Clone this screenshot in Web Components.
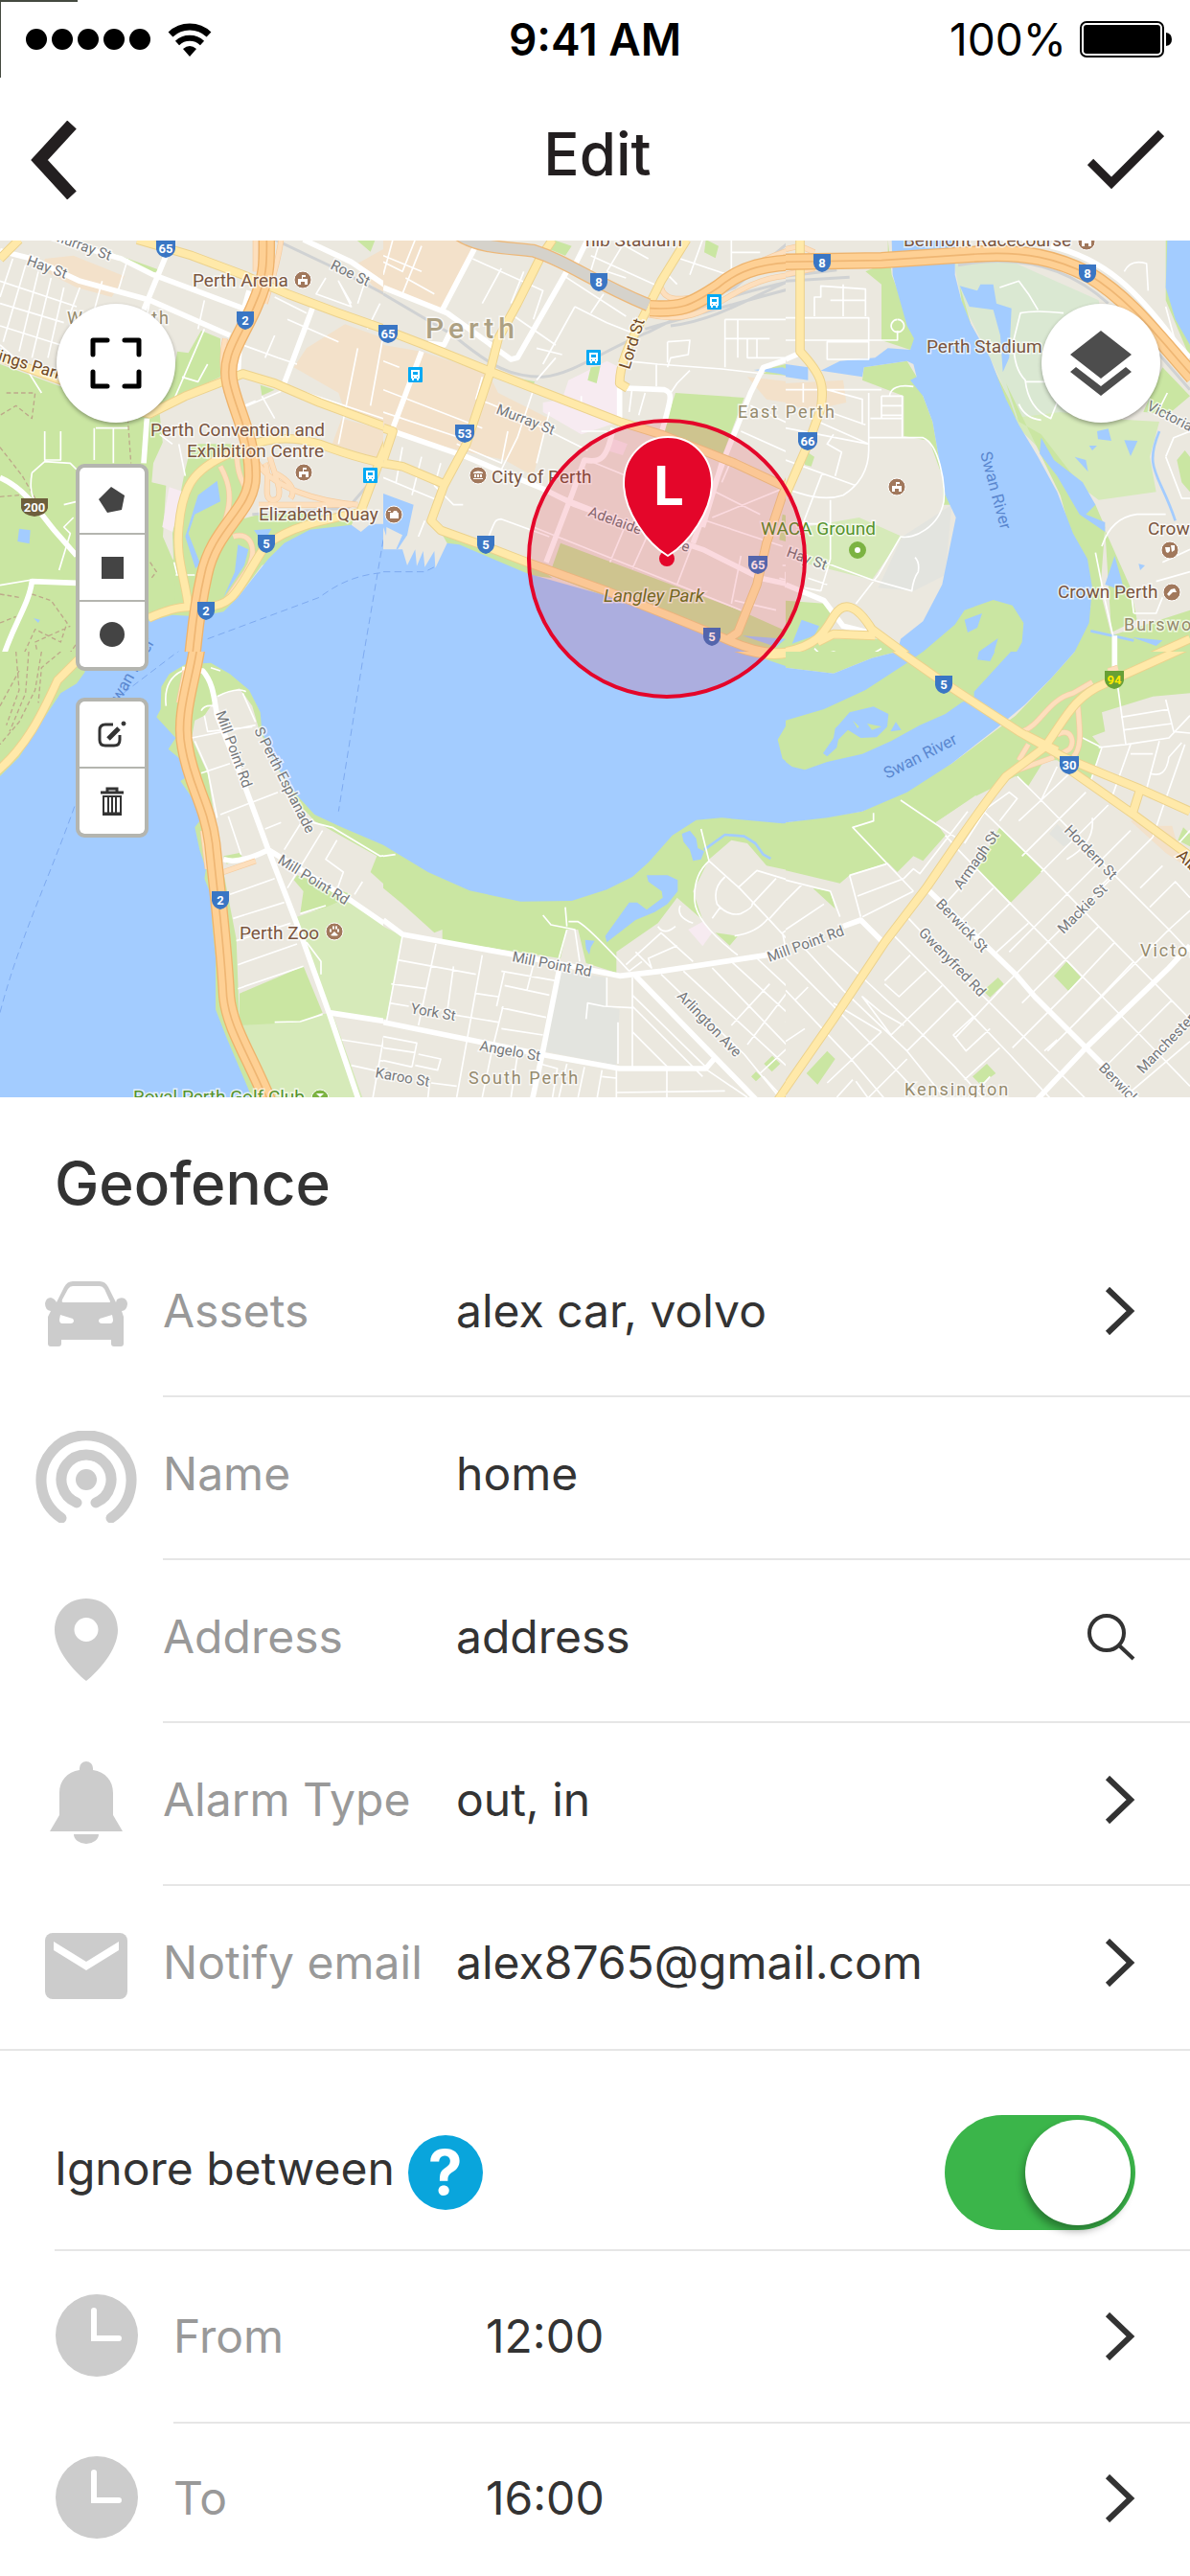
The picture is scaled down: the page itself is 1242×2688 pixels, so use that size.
<!DOCTYPE html>
<html lang=en>
<head>
<meta charset=utf-8>
<meta name=viewport content="width=device-width">
<title>Edit geofence</title>
<style>
body {
    margin:0;
    background:#fff;color:#333;
    font:48px/64px Inter,"Liberation Sans",sans-serif;
    overflow-x:hidden;
}
</style>
</head>
<body>
<status-bar></status-bar>
<title-bar>Edit</title-bar>
<main>
    <geo-map></geo-map>
    <geo-section>
        <span slot=title>Geofence</span>
        <form-row icon=car label=Assets action=open>alex car, volvo</form-row>
        <form-row icon=beacon label=Name value=home></form-row>
        <form-row icon=pin label=Address value=address action=search></form-row>
        <form-row icon=bell label="Alarm Type" action=open>out, in</form-row>
        <form-row icon=mail label="Notify email" action=open class=last>alex8765@gmail.com</form-row>
    </geo-section>
    <switch-row>Ignore between</switch-row>
    <form-row class=time icon=clock label=From action=open>12:00</form-row>
    <form-row class="time end" icon=clock label=To action=open>16:00</form-row>
</main>
<script>
const icons = {
    car: `<svg width=86 height=68 fill=#ccc><path fill-rule=evenodd d="M12 22L20 6Q23 0 29 0H57Q63 0 66 6L74 22 75 19Q79 16 83 18 86 20 86 24 85 31 80 31L82 37V65a3 3 0 0 1-3 3h-7a3 3 0 0 1-3-3v-4H17v4a3 3 0 0 1-3 3H6a3 3 0 0 1-3-3V37L6 31Q0 30 0 23 1 17 6 17 10 18 12 22ZM19 22H67Q69 22 67 19L62 8Q60 5 57 5H29Q26 5 24 8L18 19Q17 22 19 22ZM16 35L29 39Q30 40 30 42 29 44 27 44H18Q15 44 15 40ZM70 35L57 39Q56 40 56 42 57 44 59 44H68Q71 44 71 40Z"/></svg>`,
    beacon: `<svg width=106 height=96 fill=none stroke=#ccc stroke-width=11 stroke-linecap=round><path d="M27 91A47 47 0 1 1 79 91M43 75A26 26 0 1 1 63 75"/><circle cx=53 cy=51 r=11 fill=#ccc stroke=none /></svg>`,
    pin: `<svg width=66 height=86 fill=#ccc><path fill-rule=evenodd d="M33 0C14 0 0 14 0 33 0 53 20 76 33 86 46 76 66 53 66 33 66 14 52 0 33 0ZM33 20a12 12 0 1 1 0 25 12 12 0 1 1 0-25Z"/></svg>`,
    bell: `<svg width=76 height=86 fill=#ccc><path d="M31 9V7a7 7 0 0 1 14 0V9C58 11 66 20 66 33V56L76 73H0L10 56V33C10 20 18 11 31 9ZM25 76H51A13 10 0 0 1 25 76Z"/></svg>`,
    mail: `<svg width=86 height=69><rect width=86 height=69 rx=8 fill=#ccc /><path fill=#fff d="M9 9L43 30 77 9V18L43 39 9 18Z"/></svg>`,
    clock: `<svg width=86 height=86 fill=none><circle cx=43 cy=43 r=43 fill=#ccc /><path stroke=#fff stroke-width=6 stroke-linecap=round d="M40 17V46H66"/></svg>`,
    open: `<svg width=32 height=50 fill=none stroke=#333 stroke-width=6><path d="M3 2L27 25 3 48"/></svg>`,
    search: `<svg width=50 height=50 fill=none stroke=#333 stroke-width=4><circle cx=20 cy=21 r=18 /><path d="M33 34L48 48"/></svg>`,
    back: `<svg width=48 height=82 fill=none stroke=#231f20 stroke-width=13><path d="M43 4L9 41 43 78"/></svg>`,
    check: `<svg width=80 height=62 fill=none stroke=#231f20 stroke-width=9><path d="M3 33L25 55 77 3"/></svg>`,
    expand: `<svg width=54 height=54 fill=none stroke=#000 stroke-width=5 stroke-linecap=round stroke-linejoin=round><path d="M3 18V3H18M36 3H51V18M51 36V51H36M18 51H3V36"/></svg>`,
    layers: `<svg width=64 height=68 fill=#4d4d4d><path d="M32 0L64 25 32 50 0 25ZM0 43L6 38 32 58 58 38 64 43 32 68Z"/></svg>`,
    polygon: `<svg width=28 height=28 fill=#444><path d="M13 0L27 9 24 24 9 27 0 13Z"/></svg>`,
    square: `<svg width=23 height=23 fill=#444><path d="M0 0H23V23H0Z"/></svg>`,
    circle: `<svg width=26 height=26 fill=#444><circle cx=13 cy=13 r=13 /></svg>`,
    pencil: `<svg width=30 height=30 fill=none stroke=#333 stroke-width=3><path d="M16 5H8Q2 5 2 11V21Q2 27 8 27H17Q23 27 23 21V16"/><path stroke-width=5 d="M11 20L22 9"/><circle cx=27 cy=4 r=2 fill=#333 stroke-width=1 /></svg>`,
    bin: `<svg width=26 height=30 fill=none stroke=#333><path stroke-width=3 d="M1 6H25M8 5V2H18V5M3 28H23"/><path stroke-width=2 d="M4 10H22V29H4ZM9 10V28M13 10V28M17 10V28"/></svg>`
};
const button = `
button {
    display:grid;place-items:center;
    margin:0;padding:0;border:0;
    background:none;color:inherit;
    font:inherit;cursor:pointer;
}
svg {
    display:block;
}`;

class StatusBar extends HTMLElement {
    constructor() {
        super();
        this.attachShadow({mode: 'open'}).innerHTML = `
        <style>
        :host {
            display:grid;grid-template-columns:1fr auto 1fr;align-items:center;
            box-sizing:border-box;height:82px;padding:0 19px;
            background:linear-gradient(#454a40,#454a40) 0 0/81px 2px no-repeat,linear-gradient(#454a40,#454a40) 0 0/1px 81px no-repeat;
            color:#000;font-size:46px;line-height:52px;
        }
        div {
            display:flex;align-items:center;gap:14px;
        }
        .signal {
            padding-left:8px;gap:18px;
        }
        .power {
            justify-content:flex-end;
        }
        b {
            font-weight:600;
        }
        </style>
        <div class=signal>
            <svg width=130 height=22>${[11, 38, 65, 92, 119].map(x => `<circle cx=${x} cy=11 r=11 />`).join('')}</svg>
            <svg width=46 height=36><path d="M3 13A29 29 0 0 1 43 13" fill=none stroke=#000 stroke-width=7 /><path d="M10 22A19 19 0 0 1 36 22" fill=none stroke=#000 stroke-width=6 /><path d="M16 28Q23 22 30 28L23 36Z"/></svg>
        </div>
        <b>9:41 AM</b>
        <div class=power>
            <span>100%</span>
            <svg width=96 height=38><rect x=1 y=1 width=86 height=36 rx=6 fill=none stroke=#000 stroke-width=2 /><rect x=4 y=4 width=80 height=30 rx=3 /><path d="M90 12Q96 13 96 19T90 26Z"/></svg>
        </div>`;
    }
}
customElements.define('status-bar', StatusBar);

class TitleBar extends HTMLElement {
    constructor() {
        super();
        this.attachShadow({mode: 'open'}).innerHTML = `
        <style>
        ${button}
        :host {
            display:grid;grid-template-columns:1fr auto 1fr;align-items:center;
            box-sizing:border-box;height:169px;padding:0 27px 0 32px;
            color:#231f20;
        }
        h1 {
            margin:0;padding-bottom:12px;
            font-size:62px;line-height:72px;font-weight:500;
        }
        .back {
            justify-self:start;
        }
        .save {
            justify-self:end;
        }
        </style>
        <button class=back aria-label=Back>${icons.back}</button>
        <h1><slot></slot></h1>
        <button class=save aria-label=Save>${icons.check}</button>`;
    }
}
customElements.define('title-bar', TitleBar);

// every tile is drawn on a grid three times finer than the map
const tile = (x, y, w, h, {areas, street, avenue, rail = '', ramp = '', arterial = '', tunnel = '', motorway = '', ferry = ''}) => `
<svg x=${x} y=${y} width=${w} height=${h} viewBox="0 0 ${w * 3} ${h * 3}">
    <rect class=land width=${w * 3} height=${h * 3} />
    ${areas.map(([kind, d]) => `<path class=${kind} d="${d}"/>`).join('')}
    <path class=ferry d="${ferry}"/>
    <path class=rail d="${rail}"/>
    <path class=street d="${street}"/>
    <path class=avenue d="${avenue}"/>
    <path class="ramp case" d="${ramp}"/><path class=ramp d="${ramp}"/>
    <path class="arterial case" d="${arterial}"/><path class=arterial d="${arterial}"/>
    <path class="tunnel case" d="${tunnel}"/><path class=tunnel d="${tunnel}"/>
    <path class="motorway case" d="${motorway}"/><path class=motorway d="${motorway}"/><path class="motorway mid" d="${motorway}"/>
</svg>`;

const tiles = [
    [0, 250, 420, 450, {
        areas: [
            ['park', 'M0 390L190 460 470 560 500 545 530 590 480 700 475 760 520 770 510 930 540 1000 900 1350H0Z'],
            ['park', 'M600 640L720 640 800 650 800 780 700 900 660 1165 550 1165 540 920 580 720Z'],
            ['park', 'M740 880L850 850 1110 870 1100 895 820 1020 700 1180 620 1180 680 1000Z'],
            ['park', 'M555 350L590 355 630 285 690 310 690 430 540 500 450 550 540 440Z'],
            ['park', 'M360 45L500 95 480 105 370 65ZM1115 0H1175L1160 38ZM815 455L860 470 820 488Z'],
            ['land', 'M500 545L700 470 740 560 600 650 570 660 540 760 480 760 510 640Z'],
            ['shop', 'M140 60L230 50 390 115 350 180 240 150 140 100ZM1080 265L1260 330V600L1080 540 1060 480 920 400 960 340ZM1110 80L1200 30 1260 80V200L1190 170ZM1070 560L1220 600 1200 690 1040 640Z'],
            ['care', 'M530 775L575 790 540 915 508 900Z'],
            ['water', 'M620 800L680 755 690 820 610 860 590 920 627 1015 612 1030 580 930ZM745 955L778 970 765 1020 700 1120 735 1040ZM795 910L850 905 825 950ZM60 905L95 910 92 952 55 945ZM105 1185L125 1190 120 1200Z'],
            ['water', 'M265 1350L465 1195 540 1175 620 1180 700 1165 745 1120 800 1050 840 1000 890 950 970 908 1100 893 1130 915 1160 890 1210 890 1215 920 1200 960 1230 975 1260 920V1350H700L660 1325 570 1330 550 1350ZM1210 800L1260 815V900L1235 870Z'],
            ['trail', 'M0 650L70 740 110 810M0 805L60 800M20 480L110 480 100 560 50 520 0 550M400 560L410 700M100 1110L160 1130 210 1200 190 1260 110 1220 50 1350M130 1350L110 1260 220 1210M0 1110L60 1120M250 1250L180 1350M470 1010L490 1040 470 1065M0 1200L50 1180']
        ],
        rail: 'M860 0L1050 90 1260 200M790 860L1090 840 1150 770',
        street: 'M0 130L240 210M0 200L200 260M0 270L190 330M40 60L0 180M80 80L10 320M120 100L60 350M160 120L100 370M200 150L150 370M400 60L370 160M320 130L290 240M470 190L440 330M250 150L220 230M0 330L80 400 130 480M640 190L620 280M640 280L545 500M570 430L620 445 650 390M760 330L870 370 930 390M900 250L1060 320M860 300L830 370M860 180L960 230M1020 120L990 170 1100 210 1060 130 1100 200M1190 200L1150 280M1150 110L1120 200M1120 340L1060 640M1200 300L1160 520M960 480L1200 560M820 490L860 560M300 590H400M295 590V690M355 590V700M140 600V690H190V600M100 730L140 695 220 700 240 720M100 730Q90 790 110 820M240 820L200 830M230 870L200 900 220 920 185 1035M0 1082L100 1065M560 640L580 740M550 1050H610M545 1010L555 1050M765 520L800 505 M770 522L880 475M500 610L540 640',
        avenue: 'M0 35L100 60 250 130 470 190 720 300M180 0L380 60 480 110 760 215M520 50L450 220M980 210L890 450M460 560L450 700M830 170L750 330 745 420M780 160L760 230M950 0L1100 70 1260 180M0 745C80 780 120 850 170 910L240 990M240 1075L100 1070C90 1150 30 1220 0 1340M1260 500L1230 595 1260 610',
        ramp: 'M880 0C870 80 850 130 830 200M705 310C690 380 700 420 710 480M800 690C850 780 1000 820 1120 830M690 710C740 800 720 850 660 1000M740 640C740 760 770 760 770 790M730 930C790 910 810 980 770 1040L700 1140M830 700C850 740 820 810 850 815 900 820 860 740 845 680M810 830L1100 830M860 730C900 750 930 780 910 810M800 0V100',
        arterial: 'M0 370L190 440 350 520 470 545 580 490 760 420 860 450 1000 510 1230 595M430 0L600 50 760 110 900 170 1060 230 1260 300M0 60L60 0M465 1185C520 1160 560 1150 590 1150 580 1060 550 1000 560 900 570 780 600 720 720 670 820 620 900 610 1000 640 1080 670 1180 700 1260 710M640 1150C740 1150 750 1080 830 960 900 900 1000 880 1150 850M1230 595L1190 690 1130 850M240 1320L180 1350',
        motorway: 'M835-10C835 60 840 110 800 200 760 300 700 360 720 450 740 540 790 620 790 740 790 850 670 900 640 1050 610 1180 610 1260 595 1360',
        ferry: 'M1200 940L1130 1350M650 1250L1000 1120C1080 1060 1150 1040 1260 1040M460 1350L560 1290'
    }],
    [400, 250, 440, 450, {
        areas: [
            ['shop', 'M0 0H270L290 20 180 220 0 150ZM0 330L120 350 330 420 360 480 520 560 490 660 470 740 380 690 240 660 0 600Z'],
            ['care', 'M580 440L700 380 740 400 740 570 620 610 500 540 500 510 560 500ZM715 622L765 640 750 675 700 660Z'],
            ['park', 'M915 480L1130 495 1060 680 870 620ZM1010 0L1050 20 1040 58 1005 40ZM530 0L590 20 570 50 520 30ZM650 400L680 395 668 450 640 440ZM400 430L475 445 465 460Z'],
            ['park', 'M555 950L1115 1160 1250 1220 1320 1170V1350L1100 1270 520 1050ZM180 915L450 1000 530 1060 450 1050 200 950ZM1250 860L1320 880V960L1240 940ZM1220 400L1320 375V430L1190 420Z'],
            ['shop', 'M1140 430L1320 450V520L1200 500Z'],
            ['water', 'M0 795L95 830 75 925 45 970 20 960 0 900Z'],
            ['land', 'M10 900L60 925 40 970 8 960Z'],
            ['water', 'M0 970H60L75 1020 100 970 105 1022 125 975 130 1025 160 975 163 1028 200 950 238 955 450 1045 700 1115 1000 1220 1100 1265 1180 1305 1320 1350H0ZM1125 1240L1260 1250 1230 1275ZM1160 408L1250 400 1320 430V440L1240 420Z']
        ],
        rail: 'M0 170L220 300C340 400 400 430 500 430 600 420 700 340 830 290 1000 200 1100 170 1320 120M820 280C1000 230 1100 200 1290 150M900 230L1100 150 1280 0M900 270C1050 250 1150 180 1270 130',
        street: 'M0 50L120 100M30 0L0 110M60 170L120 20M100 0L60 100 0 70M70 120L160 170M370 90L310 200M280 60L500 160 470 250 M410 240L540 330M600 210L500 390M560 110L760 240M600 210L700 260 800 300M650 230L690 170M440 100L400 200M600 90L840 220M680 0L640 130M760 0L700 100M650 50L870 150M740 10L830 60M700 100L760 120M890 110L920 140M1000 0L960 110M1090 40H1180M1090 0V110L1040 150M930 60L1080 110M480 340L560 360M760 380L860 390 1060 405 1190 420M855 390V460M890 320L960 315 955 360 900 370 890 400M890 320V385M1070 250H1320M1070 250V400M1110 250V370M1070 310H1210M1140 310V370H1320M1170 310V370M960 410L920 450 900 480M780 460L770 540M820 480L800 550M0 380L50 400M0 470L310 590M300 500L470 570M0 540L240 620M470 470L420 620 370 720M540 370L480 440M310 430L290 500M440 560L640 660M520 540L480 700M620 600L700 600M620 490V520M390 600L370 700 230 640M60 650L40 760M120 680L90 800M180 700L160 770M0 745L180 820M160 770L220 830 250 830M330 930C350 880 350 875 370 875L520 930M640 690L860 780M550 800L780 890M470 900L1120 1160M760 890L710 1010M830 920L780 1030M970 950L920 1080M1030 870L1250 780M1010 880L1250 960M1040 790L1180 860M700 620V600M1100 1130L1230 1160M1120 990L1090 1140M1260 1040V1090M1250 1020H1320M1240 1060L1320 1080M1150 520L1320 600M1120 600L1320 690M1090 690L1060 760M1280 600L1270 700M110 930L130 880',
        avenue: 'M0 150L200 230 400 375 420 370 580 90M290 20L180 230M120 350L30 590M140 325L190 330 210 290M30 600L260 680 500 780 600 830 820 910 1000 970 1180 1060 1320 1090M740 460V570M760 465L880 470C910 480 900 500 870 610M1310 360L1190 400 1150 480 1070 680 970 950M590 100L640 0M460 40L830 210M720 590C700 690 680 700 630 690L590 800 510 1010M1060 700L1000 900',
        ramp: 'M870 150C880 190 920 190 980 180 1100 130 1150 60 1320 20M830 235C940 260 1000 230 1080 180 1180 120 1240 110 1320 110',
        arterial: 'M0 280L130 330 340 415 740 570 870 610 1000 660 1100 700 1250 770M530 0L490 60 420 200 360 310 330 430 260 640 190 770 150 880 180 910 320 960 450 1010 700 1100 900 1180 1060 1245C1200 1310 1270 1300 1330 1270M950 0L870 130 820 230C780 310 740 380 740 450L765 465M0 590L30 600 0 690M0 700L60 710 190 765M1320 650L1250 800 1200 950 1170 1080 1110 1230 1080 1250M1310 0V360',
        tunnel: 'M230-20C300 30 400 25 470 35 580 70 650 130 830 205',
        motorway: 'M835 215C930 220 960 210 1050 150 1120 90 1200 70 1330 70',
        ferry: 'M0 1040H130L170 1020'
    }],
    [820, 250, 422, 450, {
        areas: [
            ['stadium', 'M525 65L700 65 980 190 1000 300V560L800 590H730L690 480 640 370 550 190Z'],
            ['park', 'M320 0L332 110 410 315 390 345 300 315V140L250 100 320 70ZM245 400L380 380 410 430 430 490 460 570 500 800 530 830 495 830 490 740 450 630 370 615V490L240 440ZM545 145L580 265 700 500 730 580 720 590 640 430 560 270Z'],
            ['golf', 'M700 560L860 540 1000 560 1170 570 1140 680 1160 790 980 815 880 740Z'],
            ['park', 'M690 450L730 570 800 610 970 830 1000 900 985 1100 1020 1240 1266 1160V1350H840L955 1150 860 800ZM1180 400L1266 490 1200 545 1120 540ZM1225 690L1250 660 1266 680V790L1240 760ZM1190 0H1200L1200 150 1266 330V370L1190 190ZM1000 910L1080 1090 1100 1190 1020 1230Z'],
            ['golf', 'M60 900L230 870 365 930 270 1065 50 1010Z'],
            ['campus', 'M365 930L520 830 500 1050 400 1100 290 1090Z'],
            ['park', 'M0 1130L130 1140 150 1200 60 1300 0 1340ZM100 1250L300 1250 350 1290 450 1350H0V1290ZM60 660L90 680 80 710 60 705Z'],
            ['shop', 'M0 450L180 440 190 510 100 530 0 520Z'],
            ['water', 'M332 0H530V110L550 190 580 265 640 370 690 500 730 580 790 680 850 790 900 920 945 1000 960 1090 950 1200 905 1290 860 1350H0L150 1348 270 1310 350 1290 360 1250 430 1195 490 1080 533 870 500 800 460 570 430 490 390 440 410 430 400 390 380 380 245 400 240 430 110 410 170 380 280 370 320 340 390 345 402 310 380 270 335 110Z'],
            ['water', 'M545 145L600 160 610 140 650 140 660 200 707 215 700 370 680 415 672 300 650 220 575 210ZM0 390L70 400 70 440 0 430ZM800 620L840 690 930 760 970 830 940 860 1000 885V915L920 860 850 740 795 670ZM975 600L1010 592 1020 630 978 625ZM1060 628L1102 630 1080 678ZM905 680L940 690 947 727ZM950 645L975 645 960 660ZM1195 0H1266V330L1220 250 1190 150ZM1030 990L1050 1060 1060 1100 1000 1080ZM50 1190L105 1210 90 1240 20 1265ZM1085 1245L1180 1255 1160 1272ZM1105 1015L1125 1020 1110 1035Z'],
            ['park', 'M360 1350L530 1205 560 1160 650 1128 710 1145 745 1200 740 1260 690 1350Z'],
            ['water', 'M560 1190L615 1170 600 1215 570 1230ZM605 1290L665 1248 650 1300 620 1325Z'],
            ['creek', 'M1170 600C1120 720 1170 730 1220 880M955 1225L1090 1255']
        ],
        rail: 'M540 80C750 40 900 100 1010 200M1170 360L1266 470M0 130L200 118M0 115L160 95',
        street: 'M90 240V180H110V145L250 155V240M180 140V240M140 190H250M0 245H260V375H130V320H260M0 315H350V285M350 250A20 20 0 1 0 351 250M0 470H300M260 480V660C260 720 230 770 180 800 120 820 60 800 0 780M55 450V510M130 470L240 500V580M260 620H430C480 640 500 760 495 820 480 900 400 940 360 930L290 1050 220 1140M120 1010L270 1065 395 1100Q400 1060 415 1040 420 1010 405 995M0 590L260 640M80 560L260 640M110 530L250 580M150 610L130 640 175 665 155 740M0 690L220 770M115 730L50 900M140 815V1000L110 1100M60 890H140M300 490H365V620M300 520H365M300 550H365M265 560H365M300 490V560M325 490Q330 450 400 460M670 150L730 130 760 170 790 220M870 230Q780 220 735 230L715 310Q710 400 750 440 760 530 830 560L850 510M750 445H850M730 515Q750 560 800 565M1060 100Q1080 60 1130 75L1135 160M1190 210L1220 320M1195 480L1170 530M1190 680L1215 620 1266 600M1190 680L1240 810H1266M990 960Q1020 870 1100 860L1190 860M970 980L1000 1130 1025 1240M1090 1170L1080 1090M1090 1170H1160L1180 1120M1180 1010L1266 970M1160 1070L1266 1040M950 1350Q980 1300 1030 1300M70 1060L130 1080M60 1090L110 1100M90 1280L110 1300 150 1290 180 1300 250 1310 300 1280',
        avenue: 'M0 1080L120 1130 180 1210 260 1230M0 375L45 355M830 20C1000 60 1100 160 1220 320L1266 370M1030 1240V1350',
        ramp: 'M0 30L45 20 90 40M0 110L90 90',
        arterial: 'M45-10V350C120 430 120 460 110 530L70 640 0 800M0 1290C100 1270 120 1230 150 1180 180 1130 220 1140 270 1220L460 1360M100 1260L150 1235 280 1240M1020 1360L1266 1250',
        motorway: 'M-10 70L300 65 600 45C750 35 850 60 950 110 1080 190 1160 300 1276 430'
    }],
    [0, 680, 420, 470, {
        areas: [
            ['water', 'M0 0H1260V1410H0Z'],
            ['park', 'M0 0H280L265 65 240 100 190 130 130 220 60 330 0 390Z'],
            ['park', 'M1260 635L1200 605 1060 545 985 510 930 450 860 350 820 250 815 190 780 120 720 70 660 35 580 40 530 70 505 110 503 180 490 205 550 270 527 305 575 345 580 395 565 405 610 470 625 530 610 550 625 620 645 680 640 710 660 760 665 860 675 960V1120L710 1210 795 1410H1260Z'],
            ['land', 'M610 215L640 200 680 140 750 115 790 170 810 240 860 350 930 470 985 530 1180 640 1160 690 1260 780V1410H860L750 1170 740 900 690 640 650 380 600 270Z'],
            ['park', 'M700 640L750 630 760 645 710 665ZM930 700L1100 760 1030 800 940 820 950 750 920 715Z'],
            ['golf', 'M930 830L1020 800 1090 770 1260 890 1210 1160 1030 1130ZM750 1170L1040 1130 1140 1410H860Z'],
            ['park', 'M750 1070L950 985 1010 1130 940 1160 750 1170Z'],
            ['trail', 'M50 0L60 120 20 230M90 0L80 130 30 250M130 0L110 120 60 220 0 290M190 0L130 50 120 160M0 170L60 60']
        ],
        street: 'M520 170Q510 90 570 60M600 270L800 230M630 380L720 350M690 510L870 440M720 760L860 710M730 835L890 785M740 905L910 850M745 980L930 915M745 1055L950 985M640 200L650 250 790 235M610 280L650 370 680 520M715 515L755 635M830 555L880 535M940 540L890 620M1010 560L900 740M1055 590L1020 650 1075 690 1050 760M1135 720L1110 760M960 530L1040 550 1190 640 1235 635M760 130L800 220M680 140Q740 110 770 125M660 50L690 60M940 820L1020 795M860 1160L940 1158 1010 1135M960 910L1005 970V1010M1215 885L1250 900M1205 925L1240 955M1070 1215L1260 1245M1100 1295L1260 1330M1260 890L1240 1000 1210 1160 1165 1410M1240 1035H1260M1230 1100H1260M1200 1205L1260 1215M1190 1280L1260 1290M630 185Q640 165 670 170',
        avenue: 'M570 55L635 60C670 100 670 150 680 200L770 430 840 620 940 880 1030 1130 1125 1410M700 650C740 665 800 640 840 620L1100 780 1260 890M1030 1130L1260 1165',
        ramp: 'M580 60L560 160M635 560L650 680M700 690L800 655',
        arterial: 'M-10 375C80 300 130 200 180 90L245 25',
        motorway: 'M617-10C600 100 560 200 580 300 600 420 650 480 665 600 680 750 700 900 710 1080 720 1180 780 1260 845 1420',
        ferry: 'M0 1130C60 900 150 720 235 480M360 150L570-10M1140 0L1060 500'
    }],
    [400, 680, 440, 470, {
        areas: [
            ['water', 'M0 0H1320V1410H0Z'],
            ['park', 'M0 605L140 690 270 748 430 782 590 780 700 745 780 705 830 660 905 575 980 527 1060 520 1250 538 1320 533V1410H0ZM1320 205L1268 220 1235 275 1250 335 1285 360 1320 370ZM1130 0L1200 25 1320 65V0Z'],
            ['land', 'M0 740L60 790 160 880 185 870V905L555 960 575 870 610 870 635 975 730 1005V940L860 850 920 770 1000 840 970 750 1020 650 1090 590 1140 600 1200 670 1320 695V1410H0Z'],
            ['golf', 'M0 860L60 890 10 1150 0 1150Z'],
            ['campus', 'M555 1000L700 1020V1110L740 1120 730 1295 500 1250Z'],
            ['care', 'M955 870L1000 845 1030 880 1000 922Z'],
            ['park', 'M1218 1265L1243 1290 1217 1315 1192 1290ZM1167 1315L1183 1330 1167 1345 1152 1330ZM1040 880L1110 890 1085 920Z'],
            ['water', 'M935 570L960 560 980 585 985 615 1005 625 995 650 970 655 960 620 940 595ZM825 700H890L922 715V750L890 790 850 815 790 840 700 910 695 890 770 785 795 785 825 808 875 770 872 750 830 720ZM632 902L662 905 650 925 645 948 635 930Z'],
            ['creek', 'M1005 620L1070 573 1130 578 1165 600 1190 635 1213 648']
        ],
        street: 'M500 825L525 855 600 870 615 970M570 800L575 860M580 845H610Q640 860 770 1000M550 960L575 870M0 640L38 635M60 890L10 1160M165 915L110 1170M310 950L230 1395M220 985L200 1130M45 965L290 1010M25 1040L135 1055M20 1100L80 1110M370 1000L540 1030M380 1045L520 1075M290 1070L360 1080M370 1115L510 1145M210 1135L360 1160M370 1180L500 1200M380 1000L355 1110M375 1110L345 1230M470 980L450 1060M0 1205L105 1225 90 1300M0 1240L100 1255M0 1280L90 1300M110 1260L180 1275 170 1310 100 1295M150 1350L230 1360M145 1350L140 1395M340 1250L310 1395M420 1265L400 1395M490 1290L545 1305 530 1395M575 1290L550 1395M630 1300L610 1395M685 1310L670 1395M685 1330L730 1335M730 1305V1395M730 1380L1070 1375M888 1300V1395M780 1020V1300M780 1115L690 1110 640 1100 635 1150M700 1020V1110M735 1160V1290M780 1190L890 1300M780 1075L1010 1300M780 1110L1000 1330M870 1010L1130 1260 1240 1395M940 1000L1320 1350M1030 990L1320 1290M1090 970L1320 1180M1170 960L1320 1100M1210 1040L1090 1170M1180 1320L1320 1190M1270 1060L1140 1230M1320 1120L1260 1160M1190 1330L1250 1395M995 555L1020 655 1115 740 1205 835 1320 960M1020 655Q970 700 975 780 980 850 1110 950M1070 705Q1030 740 1045 790 1080 830 1120 820 1160 800 1155 790L1230 710M1110 740L1170 685 1320 730M1205 835Q1170 880 1100 890M1210 835L1300 735M1250 880L1320 835M1250 880L1260 930M1055 800L1030 835M760 980L870 880 970 970M790 940L840 990 830 960 920 920M770 1000L810 970M860 860Q880 890 915 860M930 795Q915 830 970 850M1000 1300L1140 1395',
        avenue: 'M0 840L60 885 390 945 740 1015 870 1000 1200 950 1320 910M790 1015L1175 1410M0 1160L270 1215 490 1260 740 1305 1010 1305 1040 1270M550 1000L500 1250 465 1410',
        arterial: 'M1100-15C1200 20 1260 15 1330-15M1225 1420L1330 1265'
    }],
    [820, 680, 422, 470, {
        areas: [
            ['park', 'M0 0H350L270 20 150 68 0 50Z'],
            ['park', 'M0 535L240 500 520 350 720 200 830 85 905 0H1266V130L1150 140 990 190 1000 250 960 265 990 300 950 420 850 340 810 340 760 420 720 390 600 450 470 535 500 575 430 655 400 640 350 690 320 660 200 700 170 725 0 685Z'],
            ['land', 'M595 450L470 535 540 580 620 480Z'],
            ['water', 'M0 50L150 68 270 20 350 0H905L830 85 750 165 660 240 520 350 380 440 240 500 130 520 0 535Z'],
            ['park', 'M0 215L120 180 250 120 380 35 430 0H705L590 125V140L550 160 500 195 420 230 330 280 240 320 130 345 60 370 20 360 0 345Z'],
            ['water', 'M165 230L200 190 275 172 322 195 318 235 285 268 235 270 195 245 165 275 160 300 130 328 117 318 150 270 155 240ZM345 220L362 245 328 250ZM605 0H655L640 30 600 25Z'],
            ['park', 'M210 215L230 235 225 240ZM255 225L300 235 270 245Z'],
            ['park', 'M670 550L805 685 705 785 600 680ZM880 970L925 1020 885 1062 840 1015ZM665 1020L683 1040 640 1082 618 1062ZM630 1290L658 1320 610 1355 585 1330ZM130 1250L155 1275 100 1355 65 1320ZM85 740L140 750 155 805ZM1245 550L1266 570V610L1228 590Z'],
            ['shop', 'M1080 530L1110 520 1150 545 1210 545 1225 600 1266 650V680L1190 630Z'],
            ['campus', 'M850 540L905 590 870 610 825 570Z']
        ],
        street: 'M275 505V530L210 550 400 750M360 465L530 580M200 700L235 830M200 700L315 665M225 765L370 710M240 830L400 750M0 715L140 750 170 830M0 780L50 730M0 870L120 790M370 710L400 680 420 695 570 500M560 600L630 490 700 440 725 460 670 530M620 500L810 685 980 860 1266 1150M725 390L800 465 1030 700 1200 870 1266 940M540 620L700 785 1110 1200 1266 1360M500 575L540 620M380 830L540 1000 630 1090 780 1240 940 1400M340 890L480 1030 700 1260 830 1400M240 1020L380 1150 530 1300 620 1400M130 920L240 1020M60 930L180 1060 380 1250 500 1400M0 960L300 1260 430 1400M0 1060L200 1270 310 1400M150 1100L300 1190M800 465L890 380M850 360L800 465 730 530M940 440L740 640M1010 480L800 690M1080 560L860 780 700 940M1150 580L980 750 660 1070M980 300L1070 290 1200 270 1266 200M1040 110L1065 290M930 270L990 300 950 420M1050 205L1200 180M1060 245L1210 225M1190 150L1215 250 1266 255M1080 290L1020 460M1170 280L1130 430M1250 290L1180 490 1150 580M1080 320H1150M1140 380Q1190 400 1200 330L1240 285M1266 560L1230 600M600 680L490 800M650 740L540 850M705 785L590 900M760 850L650 950M820 910L690 1040 530 1210M870 970L740 1100M980 860L840 1000M1030 910L890 1060 710 1240M1090 970L900 1170M1200 870L1100 970 820 1250M1266 810L1200 870M1140 800L1220 720 1266 770M1110 740L1180 670M1210 1090L1010 1290M1266 1150L1110 1310M1266 1220L1060 1395M390 950L310 1030M440 1000L355 1080 310 1040M490 1045L330 1200M590 1140L525 1200 565 1250 640 1180M540 1090L380 1250M330 1200L240 1080 300 1130 370 1170M300 1190L130 1350M380 1275L260 1395M640 1330L580 1395M670 1240L560 1340M850 1215L810 1250M60 1180L0 1220M70 1050L30 1090M210 1340L160 1395M220 1345L260 1400M1020 700L980 740M960 520Q970 600 880 650',
        avenue: 'M440 740L720 1010 780 1080 940 1240 1110 1410M1266 920L1200 990 940 1240 780 1410M180 860L235 840 305 910M1030 0V60',
        ramp: 'M740 250C800 230 820 150 900 130L960 95M915 170C920 240 930 300 900 330M850 260C900 230 910 300 880 310 850 330 830 320 830 310M730 340L760 290M700 380L840 330M1010 60L1040 50',
        arterial: 'M335-15L500 100 730 250 870 330 1000 385 1110 430 1266 500M890 370L1090 510 1266 640M1110 430L1085 510M1266-20L1000 100C900 140 870 220 810 300L690 390C600 500 530 610 440 740L310 910 150 1150-10 1380M750 260L850 310'
    }]
];

const labels = [
    ['poi', 201, 299, 'Perth Arena'],
    ['road', 54, 250, 'Murray St', 20],
    ['road', 27, 276, 'Hay St', 20],
    ['road', 344, 280, 'Roe St', 26],
    ['area', 70, 338, 'West Perth'],
    ['main', -13, 373, 'Kings Park Rd', 17],
    ['poi', 157, 455, 'Perth Convention and'],
    ['poi', 195, 477, 'Exhibition Centre'],
    ['poi', 270, 543, 'Elizabeth Quay'],
    ['city', 444, 353, 'Perth'],
    ['main', 657, 386, 'Lord St', -73],
    ['road', 517, 431, 'Murray St', 21],
    ['poi', 513, 504, 'City of Perth'],
    ['road', 613, 538, 'Adelaide Terrace', 20],
    ['reserve', 630, 628, 'Langley Park'],
    ['green', 794, 558, 'WACA Ground'],
    ['road', 820, 580, 'Hay St', 20],
    ['area', 770, 436, 'East Perth'],
    ['poi', 611, 257, 'nib Stadium'],
    ['poi', 943, 257, 'Belmont Racecourse'],
    ['poi', 967, 368, 'Perth Stadium'],
    ['river', 1023, 473, 'Swan River', 75],
    ['road', 1196, 427, 'Victoria Park Dr', 27],
    ['poi', 1198, 558, 'Crown'],
    ['poi', 1104, 624, 'Crown Perth'],
    ['area', 1173, 658, 'Burswood'],
    ['river', 120, 742, 'Swan River', -60],
    ['road', 225, 744, 'Mill Point Rd', 70],
    ['road', 265, 762, 'S Perth Esplanade', 63],
    ['road', 289, 900, 'Mill Point Rd', 32],
    ['river', 926, 813, 'Swan River', -27],
    ['poi', 250, 980, 'Perth Zoo'],
    ['road', 391, 1124, 'Karoo St', 10],
    ['green', 139, 1151, 'Royal Perth Golf Club'],
    ['road', 428, 1057, 'York St', 10],
    ['road', 500, 1096, 'Angelo St', 10],
    ['road', 534, 1003, 'Mill Point Rd', 11],
    ['area', 489, 1131, 'South Perth'],
    ['road', 706, 1040, 'Arlington Ave', 46],
    ['road', 803, 1004, 'Mill Point Rd', -20],
    ['road', 1003, 929, 'Armagh St', -55],
    ['road', 976, 944, 'Berwick St', 46],
    ['road', 958, 974, 'Gwenyfred Rd', 46],
    ['road', 1110, 867, 'Hordern St', 46],
    ['road', 1110, 975, 'Mackie St', -45],
    ['area', 1190, 998, 'Victoria Park'],
    ['road', 1193, 1121, 'Manchester St', -46],
    ['road', 1146, 1115, 'Berwick St', 46],
    ['area', 944, 1143, 'Kensington'],
    ['main', 1227, 894, 'Albany Hwy', 42]
].map(([kind, x, y, text, turn]) => `<text class=${kind} x=${x} y=${y}${turn ? ` transform="rotate(${turn} ${x} ${y})"` : ''}>${text}</text>`).join('');

const shields = [
    [173, 259, 65], [256, 334, 2], [405, 348, 65], [278, 567, 5], [215, 637, 2], [625, 294, 8],
    [485, 452, 53], [507, 568, 5], [791, 589, 65], [743, 664, 5], [858, 274, 8], [1135, 285, 8],
    [843, 460, 66], [230, 939, 2], [985, 714, 5], [1116, 798, 30],
    [1163, 709, 94, '#67a035', '#ffeb00'], [36, 529, 200, '#6e5f3c']
].map(([x, y, n, back = '#3a76c4', ink = '#fff']) => {
    let w = n > 99 ? 14 : n > 9 ? 10 : 9;
    return `<path fill=${back} d="M${x - w} ${y - 9}H${x + w}V${y + 1}Q${x + w - 1} ${y + 8} ${x} ${y + 10}Q${x - w + 1} ${y + 8} ${x - w} ${y + 1}Z"/><text class=number fill=${ink} x=${x} y=${y + 5}>${n}</text>`;
}).join('');

const stops = [[387, 496], [434, 391], [620, 373], [746, 315]].map(([x, y]) => `
<g transform="translate(${x - 8} ${y - 8})"><rect width=15 height=16 rx=1 fill=#03a9f4 /><path fill=#fff fill-rule=evenodd d="M3 3H12V12H11V14H9V12H6V14H4V12H3ZM5 5V8H10V5ZM5 10V11H6V10ZM9 10V11H10V10Z"/></g>`).join('');

const glyphs = {
    hall: 'M-5-1H5V5H2V2H-2V5H-5ZM-1-5H3V-3H0V-1H-1Z',
    photo: 'M-4-2H-1L0-4H3L4-2H5V4H-4ZM-6-4H-3V-3H-6Z',
    civic: 'M-5-3Q0-6 5-3V-2H-5ZM-4-1H-2V2H-4ZM-1-1H1V2H-1ZM2-1H4V2H2ZM-5 3H5V4H-5Z',
    paw: 'M-5-1A1 2 0 1 1-3-1 1 2 0 1 1-5-1M-2-4A1 2 0 1 1 0-4 1 2 0 1 1-2-4M1-4A1 2 0 1 1 3-4 1 2 0 1 1 1-4M3-1A1 2 0 1 1 5-1 1 2 0 1 1 3-1M0 0L4 4Q0 5-4 4Z',
    masks: 'M-5-3H0V1L-2 3-4 2ZM1-5H5V0L2 2Z',
    dice: 'M-5 2L-1-3 3-4 5 0 1 0-3 4Z',
    flag: 'M-4-5H4L0-1 4 4H-4L1 0Z'
};
const places = [
    [316, 292, 'hall'], [317, 493, 'hall'], [411, 537, 'photo'], [499, 496, 'civic'], [936, 508, 'hall'],
    [1134, 252, 'hall'], [1221, 574, 'masks'], [1223, 618, 'dice'], [349, 972, 'paw'], [334, 1146, 'flag', '#7cb342']
].map(([x, y, glyph, back = '#a1785c']) => `
<g transform="translate(${x} ${y})"><circle r=9 fill=${back} stroke=#fff /><path fill=#fff d="${glyphs[glyph]}"/></g>`).join('');

class GeoMap extends HTMLElement {
    constructor() {
        super();
        this.attachShadow({mode: 'open'}).innerHTML = `
        <style>
        ${button}
        :host {
            display:block;position:relative;
        }
        .map {
            width:100%;height:auto;overflow:hidden;
        }
        .map path {
            stroke-linejoin:round;
        }
        .land {fill:#ebe8df}
        .park {fill:#cae6a2}
        .golf {fill:#d6eab9}
        .stadium {fill:#dae8d2}
        .campus {fill:#e3e4df}
        .shop {fill:#f3e1ca}
        .care {fill:#f7ebf1}
        .water {fill:#a3ccff}
        .creek {fill:none;stroke:#a3ccff;stroke-width:8}
        .trail {fill:none;stroke:#bda88a;stroke-width:4;stroke-dasharray:14 9}
        .ferry {fill:none;stroke:#7eaaf0;stroke-width:3;stroke-dasharray:22 13}
        .rail {fill:none;stroke:#d0d2d3;stroke-width:9}
        .street {fill:none;stroke:#fff;stroke-width:5}
        .avenue {fill:none;stroke:#fff;stroke-width:17}
        .ramp {fill:none;stroke:#fddfbd;stroke-width:14}
        .ramp.case {stroke:#f6cc9f;stroke-width:18}
        .arterial {fill:none;stroke:#ffe9a9;stroke-width:23}
        .arterial.case {stroke:#ecd28d;stroke-width:29}
        .tunnel {fill:none;stroke:#d5d2cb;stroke-width:34}
        .tunnel.case {stroke:#edb879;stroke-width:42}
        .motorway {fill:none;stroke:#fed094;stroke-width:44}
        .motorway.case {stroke:#eeb36c;stroke-width:52}
        .motorway.mid {stroke:#efb673;stroke-width:5}
        text {
            font-family:Roboto,"Liberation Sans",sans-serif;font-size:19px;
            stroke:#fff;stroke-width:3px;stroke-opacity:.7;paint-order:stroke;
        }
        .poi {fill:#7a5540}
        .road {fill:#75777a;font-size:15px}
        .main {fill:#704a24;font-size:17px}
        .area {fill:#958a6c;font-size:18px;letter-spacing:2px}
        .city {fill:#ada183;font-size:30px;font-weight:500;letter-spacing:5px}
        .river {fill:#5a87cf;stroke:none;font-size:17px}
        .green {fill:#56932c}
        .reserve {fill:#60781e;font-style:italic}
        .number {font-size:13px;font-weight:700;text-anchor:middle;stroke:none}
        .initial {fill:#fff;stroke:none;font:700 56px Inter,"Liberation Sans",sans-serif;text-anchor:middle}
        .tools {
            position:absolute;top:66px;left:59px;
            display:flex;flex-direction:column;align-items:flex-start;
        }
        .tools.right {
            left:auto;right:31px;
        }
        .round {
            width:124px;height:124px;border-radius:50%;
            background:#fff;box-shadow:0 2px 4px #0005;
        }
        .group {
            margin:43px 0 0 20px;
            border:4px solid #b4b5af;border-radius:9px;
            background:#b4b5af;overflow:hidden;
            display:grid;gap:2px;
        }
        .group + .group {
            margin-top:28px;
        }
        .group button {
            width:68px;height:68px;
            background:#fff;
        }
        .group button:first-child {
            border-radius:5px 5px 0 0;
        }
        .group button:last-child {
            border-radius:0 0 5px 5px;
        }
        </style>
        <svg class=map viewBox="0 251 1242 894" role=img aria-label="Map of Perth">
            ${tiles.map(data => tile(...data)).join('')}
            ${labels}${shields}${stops}${places}
            <circle cx=895 cy=574 r=6 fill=#fff stroke=#7cb342 stroke-width=6 />
            <circle cx=696 cy=583 r=144 fill=#e4062a fill-opacity=.15 stroke=#e4062a stroke-width=4 />
            <circle cx=696 cy=583 r=8 fill=#e4062a />
            <path fill=#e4062a stroke=#fff stroke-width=2 d="M697 456C671 456 651 477 651 504 651 533 675 567 697 580 719 567 743 533 743 504 743 477 723 456 697 456Z"/>
            <text class=initial x=698 y=527>L</text>
        </svg>
        <div class=tools>
            <button class=round aria-label="Full screen">${icons.expand}</button>
            <div class=group>
                <button aria-label="Draw polygon">${icons.polygon}</button>
                <button aria-label="Draw square">${icons.square}</button>
                <button aria-label="Draw circle">${icons.circle}</button>
            </div>
            <div class=group>
                <button aria-label="Edit shape">${icons.pencil}</button>
                <button aria-label="Delete shape">${icons.bin}</button>
            </div>
        </div>
        <div class="tools right">
            <button class=round aria-label=Layers>${icons.layers}</button>
        </div>`;
    }
}
customElements.define('geo-map', GeoMap);

class GeoSection extends HTMLElement {
    constructor() {
        super();
        this.attachShadow({mode: 'open'}).innerHTML = `
        <style>
        :host {
            display:block;
            border-bottom:2px solid #e6e6e6;
        }
        h2 {
            margin:0;padding:54px 57px 17px;
            font-size:62px;line-height:72px;font-weight:500;
        }
        </style>
        <h2><slot name=title></slot></h2>
        <slot></slot>`;
    }
}
customElements.define('geo-section', GeoSection);

class FormRow extends HTMLElement {
    constructor() {
        super();
        let {icon, label, value, action} = Object.fromEntries([...this.attributes].map(a => [a.name, a.value]));
        this.attachShadow({mode: 'open'}).innerHTML = `
        <style>
        ${button}
        :host {
            display:grid;grid-template-columns:106px 1fr;gap:27px;
            padding-left:37px;
            --height:170px;--label:306px;--lift:8px;
        }
        :host(.time) {
            grid-template-columns:86px 1fr;gap:37px;
            padding-left:58px;
            --height:180px;--label:326px;--lift:0px;
        }
        :host(.end) {
            --height:158px;
        }
        .icon, .body {
            display:flex;align-items:center;
            box-sizing:border-box;height:var(--height);
            padding-bottom:var(--lift);
        }
        .icon {
            justify-content:center;
            padding-bottom:4px;
        }
        .body {
            min-width:0;padding-right:57px;
            border-bottom:2px solid #e6e6e6;
        }
        :host(.last) .body, :host(.end) .body {
            border-color:transparent;
        }
        label {
            flex:none;width:var(--label);
            color:#999;white-space:nowrap;
        }
        input, output {
            flex:1;min-width:0;
            margin:0;padding:0;border:0;
            background:none;color:inherit;font:inherit;outline:none;
        }
        </style>
        <div class=icon>${icons[icon]}</div>
        <div class=body>
            <label for=value>${label}</label>
            ${value ? `<input id=value value="${value}">` : '<output id=value><slot></slot></output>'}
            ${action ? `<button aria-label="${action} ${label}">${icons[action]}</button>` : ''}
        </div>`;
    }
}
customElements.define('form-row', FormRow);

class SwitchRow extends HTMLElement {
    constructor() {
        super();
        this.attachShadow({mode: 'open'}).innerHTML = `
        <style>
        ${button}
        :host {
            display:flex;align-items:center;gap:14px;
            margin-left:57px;padding:67px 57px 20px 0;
            border-bottom:2px solid #e6e6e6;
        }
        label {
            padding-bottom:8px;
        }
        button {
            width:78px;height:78px;border-radius:50%;
            background:#09a5dc;color:#fff;
            font-size:64px;line-height:78px;font-weight:700;
        }
        input {
            appearance:none;
            display:flex;box-sizing:border-box;
            width:199px;height:120px;margin:0 0 0 auto;padding:5px;
            border-radius:60px;background:#ccc;cursor:pointer;
        }
        input::before {
            content:'';
            width:110px;height:110px;border-radius:50%;
            background:#fff;box-shadow:-2px 6px 9px #0005;
        }
        input:checked {
            justify-content:flex-end;
            background:#3bb54a;
        }
        </style>
        <label for=switch><slot></slot></label>
        <button aria-label=Help>?</button>
        <input id=switch type=checkbox role=switch checked>`;
    }
}
customElements.define('switch-row', SwitchRow);
</script>
</body>
</html>
